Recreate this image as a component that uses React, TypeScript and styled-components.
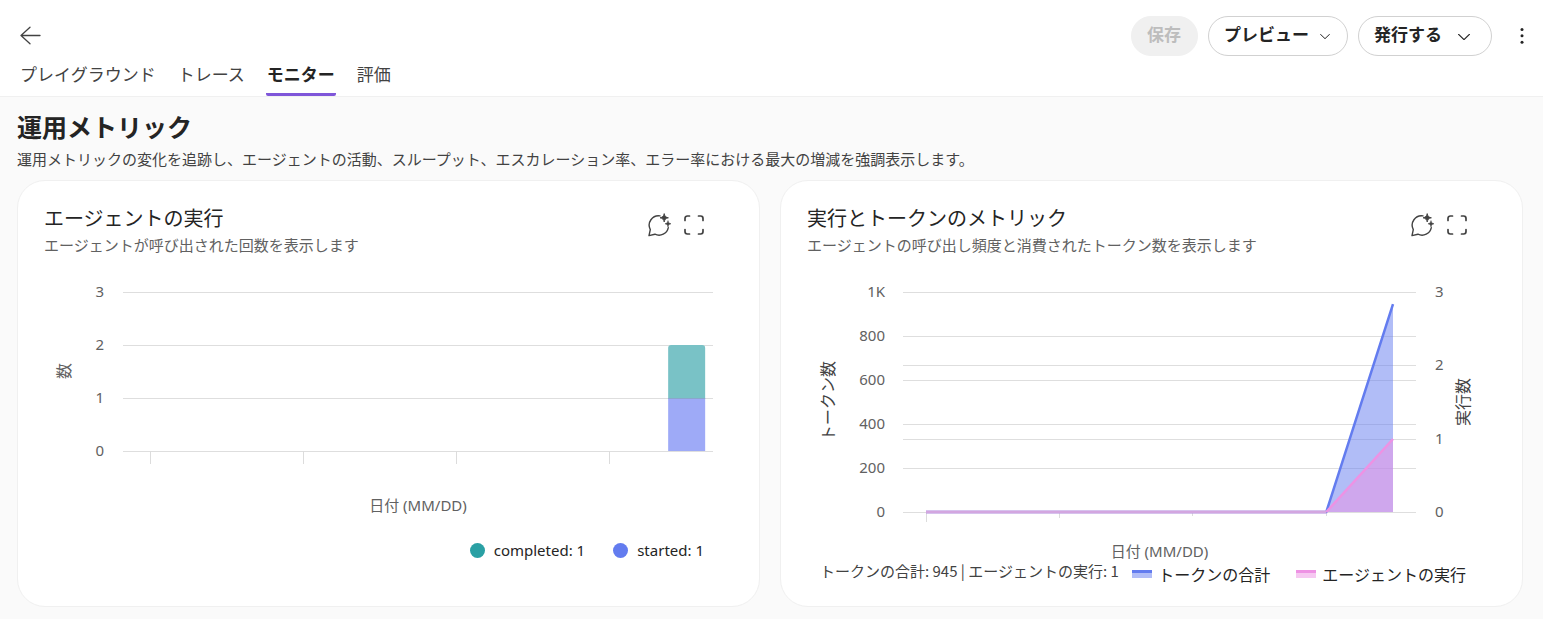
import React, { useLayoutEffect, useRef, useState } from 'react';
import styled, { createGlobalStyle } from 'styled-components';

const GlobalStyle = createGlobalStyle`
  * { box-sizing: border-box; }
  body {
    margin: 0;
    background: #fafafa;
    color: #242424;
    font-family: "Noto Sans", "Noto Sans CJK JP", sans-serif;
    font-size: 15px;
  }
  h1, h2, p { margin: 0; }
  button { font-family: inherit; cursor: pointer; }
`;

const Header = styled.header`
  background: #ffffff;
  border-bottom: 1px solid #f0f0f0;
`;

const TopBar = styled.div`
  display: flex;
  align-items: center;
  justify-content: space-between;
  padding: 16px 1px 0 18px;
`;

const Actions = styled.div`
  display: flex;
  align-items: center;
  gap: 10px;
`;

const PillButton = styled.button<{ $gap?: number; $end: number }>`
  display: flex;
  align-items: center;
  gap: ${(p) => p.$gap ?? 0}px;
  height: 40px;
  padding: 0 ${(p) => p.$end}px 3px 15px;
  border: 1px solid #d1d1d1;
  border-radius: 20px;
  background: #ffffff;
  color: #242424;
  font-size: 17px;
  font-weight: 700;
  line-height: 24px;
  svg { margin-top: 4px; }
  &:disabled {
    border-color: #f0f0f0;
    background: #f0f0f0;
    color: #bdbdbd;
    cursor: default;
  }
`;

const IconButton = styled.button<{ $width?: number }>`
  display: flex;
  align-items: center;
  justify-content: center;
  width: ${(p) => p.$width ?? 24}px;
  height: 24px;
  padding: 0;
  border: 0;
  background: none;
  color: #424242;
`;

const Tabs = styled.nav`
  display: flex;
  gap: 20px;
  padding: 4px 19px 0;
`;

const Tab = styled.button<{ $active?: boolean }>`
  height: 36px;
  padding: 0 1px 4px;
  border: 0;
  border-bottom: 3px solid ${(p) => (p.$active ? '#7f56d9' : 'transparent')};
  border-radius: 2px;
  background: none;
  color: ${(p) => (p.$active ? '#242424' : '#424242')};
  font-size: 17px;
  font-weight: ${(p) => (p.$active ? 700 : 400)};
  line-height: 24px;
`;

const Main = styled.main`
  padding: 12px 20px 12px 17px;
`;

const Heading = styled.h1`
  font-size: 25px;
  font-weight: 700;
  line-height: 36px;
`;

const Lead = styled.p`
  padding-top: 2px;
  color: #424242;
  line-height: 24px;
`;

const Cards = styled.div`
  display: grid;
  grid-template-columns: repeat(2, minmax(0, 1fr));
  gap: 20px;
  margin-top: 9px;
`;

const Card = styled.section`
  padding: 24px 0;
  border: 1px solid #f0f0f0;
  border-radius: 28px;
  background: #ffffff;
`;

const CardHeader = styled.div`
  display: flex;
  align-items: flex-start;
  justify-content: space-between;
  height: 53px;
  padding: 0 53px 0 26px;
`;

const CardTitle = styled.h2`
  font-size: 20px;
  font-weight: 400;
  line-height: 28px;
`;

const CardNote = styled.p`
  color: #616161;
  line-height: 24px;
`;

const Tools = styled.div`
  display: flex;
  gap: 11px;
  padding-top: 8px;
`;

const ChartBox = styled.div<{ $height: number }>`
  height: ${(p) => p.$height}px;
  overflow: hidden;
  svg { display: block; }
  text { fill: #616161; }
  text.axis { fill: #424242; }
`;

const DotLegend = styled.ul`
  display: flex;
  justify-content: flex-end;
  gap: 28px;
  margin: 18px 0 0;
  padding: 0 55px 0 0;
  list-style: none;
  line-height: 24px;
`;

const LegendItem = styled.li<{ $gap: number }>`
  display: flex;
  align-items: center;
  gap: ${(p) => p.$gap}px;
`;

const Dot = styled.span<{ $color: string }>`
  width: 15px;
  height: 15px;
  border-radius: 50%;
  background: ${(p) => p.$color};
`;

const ChartFooter = styled.div`
  display: flex;
  align-items: flex-start;
  justify-content: space-between;
  height: 22px;
  padding: 0 56px 0 39px;
`;

const Totals = styled.p`
  color: #424242;
  font-family: "Noto Sans CJK JP", sans-serif;
  line-height: 22px;
  white-space: nowrap;
`;

const SeriesLegend = styled.ul`
  display: flex;
  gap: 26px;
  margin: 0;
  padding: 0;
  list-style: none;
  font-size: 16px;
  line-height: 30px;
  white-space: nowrap;
`;

const Swatch = styled.span<{ $line: string; $fill: string }>`
  width: 20px;
  height: 8px;
  margin-bottom: 3px;
  border-top: 3px solid ${(p) => p.$line};
  background: ${(p) => p.$fill};
`;

function useWidth() {
  const ref = useRef<HTMLDivElement>(null);
  const [width, setWidth] = useState(741);
  useLayoutEffect(() => {
    const measure = () => {
      if (ref.current) setWidth(ref.current.clientWidth);
    };
    measure();
    window.addEventListener('resize', measure);
    return () => window.removeEventListener('resize', measure);
  }, []);
  return { ref, width };
}

function Chevron({ size }: { size: number }) {
  return (
    <svg width={size} height={size / 2} viewBox="0 0 12 6" fill="none" stroke="currentColor" strokeWidth="1.2" strokeLinecap="round" strokeLinejoin="round" aria-hidden="true">
      <path d="M.6.4 6 5.6 11.4.4" />
    </svg>
  );
}

function ChatSparkle() {
  return (
    <svg width="24" height="24" viewBox="0 0 24 24" fill="none" aria-hidden="true">
      <path d="M13 2.9A9.4 9.4 0 0 0 3.3 16.6L2 22.6l5.9-1.4A9.4 9.4 0 0 0 21.3 14.6" stroke="currentColor" strokeWidth="1.4" strokeLinecap="round" strokeLinejoin="round" />
      <path d="M17.2.6c.6 2.6 1.2 3.5 4.2 4.2-3 .7-3.6 1.6-4.2 4.2-.6-2.6-1.2-3.5-4.2-4.2 3-.7 3.6-1.6 4.2-4.2z" fill="currentColor" stroke="currentColor" strokeWidth=".9" />
      <path d="M21 7.600c.4 2 .9 2.700 3 3.200-2.100.5-2.600 1.200-3 3.200-.4-2-.9-2.700-3-3.200 2.100-.5 2.600-1.200 3-3.200z" fill="currentColor" stroke="currentColor" strokeWidth=".5" />
    </svg>
  );
}

function Expand() {
  return (
    <svg width="24" height="24" viewBox="0 0 24 24" fill="none" stroke="currentColor" strokeWidth="1.7" strokeLinecap="round" aria-hidden="true">
      <path d="M3 7.500V5.400A2.400 2.400 0 0 1 5.400 3H7.500M16.500 3h2.100A2.400 2.400 0 0 1 21 5.400V7.500M21 16.500v2.100a2.400 2.400 0 0 1-2.400 2.400H16.500M7.500 21H5.400A2.400 2.400 0 0 1 3 18.600V16.500" />
    </svg>
  );
}

function CardTop({ title, note }: { title: string; note: string }) {
  return (
    <CardHeader>
      <div>
        <CardTitle>{title}</CardTitle>
        <CardNote>{note}</CardNote>
      </div>
      <Tools>
        <IconButton aria-label="チャット"><ChatSparkle /></IconButton>
        <IconButton aria-label="全画面表示"><Expand /></IconButton>
      </Tools>
    </CardHeader>
  );
}

function RunsChart() {
  const { ref, width } = useWidth();
  const left = 105;
  const right = width - 46;
  const span = right - left;
  const y = (v: number) => 193 - v * 53;
  const barX = left + span * 0.924;
  const barWidth = 37;
  return (
    <ChartBox ref={ref} $height={262}>
      <svg width={width} height="262" role="img" aria-label="エージェントの実行">
        {[0, 1, 2, 3].map((v) => (
          <g key={v}>
            <rect x={left} y={y(v)} width={span} height="1" fill="#dedede" />
            <text x="86" y={y(v) + 5} textAnchor="end">{v}</text>
          </g>
        ))}
        <path d={`M${barX} ${y(1)}V${y(2) + 3}a3 3 0 0 1 3-3h${barWidth - 6}a3 3 0 0 1 3 3V${y(1)}z`} fill="#79c2c6" />
        <rect x={barX} y={y(1)} width={barWidth} height={y(0) - y(1)} fill="#9eaaf7" />
        <rect x={barX} y={y(1)} width={barWidth} height="1" fill="#8aa6cc" />
        {[0.046, 0.306, 0.565, 0.825].map((t) => (
          <rect key={t} x={Math.floor(left + span * t)} y={y(0)} width="1" height="13" fill="#dcdcdc" />
        ))}
        <text x="52" y="113" fontSize="16" textAnchor="middle" transform="rotate(-90 52 113)">数</text>
        <text x={(left + right) / 2} y="253" textAnchor="middle">日付 (MM/DD)</text>
      </svg>
    </ChartBox>
  );
}

function TokensChart() {
  const { ref, width } = useWidth();
  const left = 122;
  const right = width - 106;
  const span = right - left;
  const base = 254;
  const first = left + 23;
  const last = right - 23;
  const step = (last - first) / 7;
  const knee = last - step;
  const tokens = (v: number) => base - (v / 1000) * 220;
  const runs = (v: number) => Math.round(base - (v / 3) * 220);
  return (
    <ChartBox ref={ref} $height={302}>
      <svg width={width} height="302" role="img" aria-label="実行とトークンのメトリック">
        {[0, 200, 400, 600, 800, 1000].map((v) => (
          <g key={v}>
            <rect x={left} y={tokens(v)} width={span} height="1" fill="#dedede" />
            <text x="104" y={tokens(v) + 5} textAnchor="end">{v === 1000 ? '1K' : v}</text>
          </g>
        ))}
        {[0, 1, 2, 3].map((v) => (
          <g key={v}>
            <rect x={left} y={runs(v)} width={span} height="1" fill="#dedede" />
            <text x={right + 19} y={runs(v) + 5}>{v}</text>
          </g>
        ))}
        {[9, 5, 3, 3].map((length, i) => (
          <rect key={i} x={Math.floor(first + step * 2 * i)} y={base + 1} width="1" height={length} fill="#dcdcdc" />
        ))}
        <path d={`M${knee} ${base}L${last} ${tokens(945)}V${base}z`} fill="#637cef" opacity=".5" />
        <path d={`M${first} ${base}H${knee}L${last} ${tokens(945)}`} fill="none" stroke="#637cef" strokeWidth="2.500" />
        <path d={`M${knee} ${base}L${last} ${runs(1)}V${base}z`} fill="#ee92e4" opacity=".5" />
        <path d={`M${knee} ${base}L${last} ${runs(1)}`} fill="none" stroke="#ee92e4" strokeWidth="2.500" />
        <path d={`M${first} ${base}H${knee}`} fill="none" stroke="#d3a6e0" strokeWidth="3" />
        <text className="axis" x="53" y="143" fontSize="16" textAnchor="middle" transform="rotate(-90 53 143)">トークン数</text>
        <text className="axis" x={right + 53} y="144" fontSize="16" textAnchor="middle" transform={`rotate(-90 ${right + 53} 144)`}>実行数</text>
        <text x={(left + right) / 2} y="299" textAnchor="middle">日付 (MM/DD)</text>
      </svg>
    </ChartBox>
  );
}

export default function App() {
  return (
    <>
      <GlobalStyle />
      <Header>
        <TopBar>
          <IconButton aria-label="戻る">
            <svg width="24" height="24" viewBox="0 0 24 24" fill="none" stroke="currentColor" strokeWidth="1.300" strokeLinecap="round" strokeLinejoin="round" aria-hidden="true">
              <path d="M12 3.200 3 11.500l9 8.300M3 11.500h19" />
            </svg>
          </IconButton>
          <Actions>
            <PillButton $end={16} disabled>保存</PillButton>
            <PillButton $end={17} $gap={11}>プレビュー<Chevron size={10} /></PillButton>
            <PillButton $end={21} $gap={16}>発行する<Chevron size={12} /></PillButton>
            <IconButton $width={40} aria-label="その他">
              <svg width="4" height="18" viewBox="0 0 4 18" fill="#242424" aria-hidden="true">
                <circle cx="2" cy="2.500" r="1.500" />
                <circle cx="2" cy="8.800" r="1.500" />
                <circle cx="2" cy="15.200" r="1.500" />
              </svg>
            </IconButton>
          </Actions>
        </TopBar>
        <Tabs>
          <Tab>プレイグラウンド</Tab>
          <Tab>トレース</Tab>
          <Tab $active aria-current="page">モニター</Tab>
          <Tab>評価</Tab>
        </Tabs>
      </Header>
      <Main>
        <Heading>運用メトリック</Heading>
        <Lead>運用メトリックの変化を追跡し、エージェントの活動、スループット、エスカレーション率、エラー率における最大の増減を強調表示します。</Lead>
        <Cards>
          <Card>
            <CardTop title="エージェントの実行" note="エージェントが呼び出された回数を表示します" />
            <RunsChart />
            <DotLegend>
              <LegendItem $gap={9}><Dot $color="#2aa0a4" />completed: 1</LegendItem>
              <LegendItem $gap={9}><Dot $color="#637cef" />started: 1</LegendItem>
            </DotLegend>
          </Card>
          <Card>
            <CardTop title="実行とトークンのメトリック" note="エージェントの呼び出し頻度と消費されたトークン数を表示します" />
            <TokensChart />
            <ChartFooter>
              <Totals>トークンの合計: 945 | エージェントの実行: 1</Totals>
              <SeriesLegend>
                <LegendItem $gap={6}><Swatch $line="#637cef" $fill="#b1bdf7" />トークンの合計</LegendItem>
                <LegendItem $gap={6}><Swatch $line="#ee92e4" $fill="#f6c8f1" />エージェントの実行</LegendItem>
              </SeriesLegend>
            </ChartFooter>
          </Card>
        </Cards>
      </Main>
    </>
  );
}
